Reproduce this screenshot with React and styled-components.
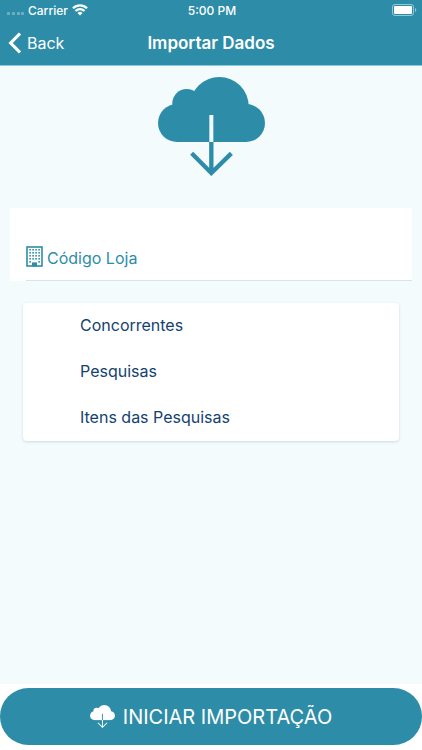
import React from 'react';
import styled, { createGlobalStyle } from 'styled-components';

const GlobalStyle = createGlobalStyle`
  * {
    box-sizing: border-box;
  }

  body {
    margin: 0;
    background: #fff;
    font-family: Inter, 'Liberation Sans', sans-serif;
  }
`;

const PageStyles = styled.div`
  display: flex;
  flex-direction: column;
  min-height: 100vh;
`;

const HeaderStyles = styled.header`
  background: #2d8da8;
  border-bottom: 1px solid #8ccbdd;
  color: #fff;
`;

const StatusBar = styled.div`
  display: grid;
  grid-template-columns: 1fr auto 1fr;
  align-items: center;
  height: 20px;
  padding: 0 5px 0 7px;
  font-size: 12px;
  font-weight: 500;

  .carrier {
    display: flex;
    align-items: center;
    gap: 4px;
  }

  .battery {
    justify-self: end;
  }

  svg {
    display: block;
  }
`;

const NavBar = styled.div`
  display: grid;
  grid-template-columns: 1fr auto 1fr;
  align-items: center;
  height: 45px;
  padding: 0 8px;

  h1 {
    margin: 0;
    font-size: 17px;
    font-weight: 600;
  }
`;

const BackButton = styled.button`
  display: flex;
  align-items: center;
  gap: 5px;
  padding: 0;
  border: 0;
  background: none;
  color: inherit;
  font: inherit;
  font-size: 16px;
  cursor: pointer;
`;

const ContentStyles = styled.main`
  flex: 1;
  background: #f3fbfd;
`;

const HeroIcon = styled.div`
  display: flex;
  justify-content: center;
  padding: 11px 0 32px;
`;

const Field = styled.div`
  margin: 0 10px;
  padding: 27px 0 0 16px;
  background: #fff;
  color: #2d8da8;

  .field__inner {
    display: flex;
    align-items: center;
    gap: 4px;
    height: 46px;
    border-bottom: 1px solid #d5e5ea;
  }

  label {
    display: flex;
    margin-bottom: 2px;
  }

  input {
    flex: 1;
    min-width: 0;
    padding: 0;
    border: 0;
    outline: 0;
    background: none;
    color: inherit;
    font: inherit;
    font-size: 16px;
  }

  input::placeholder {
    color: inherit;
    opacity: 1;
  }
`;

const CardList = styled.ul`
  margin: 22px 23px;
  padding: 0;
  border-radius: 4px;
  background: #fff;
  box-shadow: 0 1px 3px rgba(0, 50, 70, 0.16);
  list-style: none;
`;

const CardItem = styled.li`
  display: flex;
  align-items: center;
  height: 46px;
  padding: 0 16px 2px 57px;
  color: #14426f;
  font-size: 16px;
`;

const FooterStyles = styled.footer`
  padding: 4px 0 5px;
  background: #fff;
`;

const ImportButton = styled.button`
  display: flex;
  align-items: center;
  justify-content: center;
  gap: 8px;
  width: 100%;
  height: 57px;
  border: 0;
  border-radius: 29px;
  background: #2d8da8;
  color: #fff;
  font: inherit;
  font-size: 20px;
  cursor: pointer;
`;

function CloudDownload({ width, height, color, stem }) {
  return (
    <svg width={width} height={height} viewBox="52 36 321 297" aria-hidden="true">
      <g fill={color}>
        <circle cx="109" cy="174" r="57" />
        <circle cx="316" cy="174" r="57" />
        <circle cx="138" cy="115" r="43" />
        <circle cx="236" cy="124" r="88" />
        <rect x="109" y="120" width="207" height="111" />
      </g>
      <path d="M212 150V231" stroke={stem} strokeWidth="12" />
      <path
        d="M212 231V322M153 265L212 324L272 265"
        fill="none"
        stroke={color}
        strokeWidth="13"
      />
    </svg>
  );
}

function Wifi() {
  return (
    <svg width="16" height="12" viewBox="0 0 16 12" fill="#fff" aria-hidden="true">
      <path d="M8 11.6L10.5 9a3.6 3.6 0 0 0-5 0z" />
      <path
        d="M3.5 7a6.4 6.4 0 0 1 9 0M1 4.3a10 10 0 0 1 14 0"
        fill="none"
        stroke="#fff"
        strokeWidth="2.2"
      />
    </svg>
  );
}

function Signal() {
  return (
    <svg width="17" height="12" viewBox="0 0 17 12" fill="#fff" opacity="0.3" aria-hidden="true">
      {[0, 5, 10, 14].map((x) => (
        <rect key={x} x={x} y="8" width="3" height="3" rx="0.5" />
      ))}
    </svg>
  );
}

function Battery() {
  return (
    <svg className="battery" width="25" height="12" viewBox="0 0 25 12" aria-hidden="true">
      <rect x="0.5" y="0.5" width="21" height="11" rx="2.5" fill="none" stroke="#fff" opacity="0.5" />
      <rect x="2" y="2" width="18" height="8" rx="1" fill="#fff" />
      <path d="M23 4a2.2 2.2 0 0 1 0 4z" fill="#fff" opacity="0.5" />
    </svg>
  );
}

function Building() {
  return (
    <svg width="17" height="21" viewBox="0 0 17 21" aria-hidden="true">
      <rect x="1" y="1" width="15" height="19" fill="none" stroke="#2d8da8" strokeWidth="1.6" />
      <g fill="#2d8da8">
        {[3, 6, 9, 12].map((x) =>
          [3, 6, 9, 12, 15]
            .filter((y) => y < 15 || x === 3 || x === 12)
            .map((y) => <rect key={`${x}-${y}`} x={x + 0.3} y={y} width="1.6" height="1.6" />)
        )}
        <rect x="6" y="16.4" width="5" height="4" />
      </g>
    </svg>
  );
}

const items = ['Concorrentes', 'Pesquisas', 'Itens das Pesquisas'];

export default function App() {
  return (
    <PageStyles>
      <GlobalStyle />
      <HeaderStyles>
        <StatusBar>
          <div className="carrier">
            <Signal />
            <span>Carrier</span>
            <Wifi />
          </div>
          <span>5:00 PM</span>
          <Battery />
        </StatusBar>
        <NavBar>
          <BackButton type="button">
            <svg width="14" height="22" viewBox="0 0 14 22" aria-hidden="true">
              <path d="M12 1.5L2.7 11L12 20.5" fill="none" stroke="#fff" strokeWidth="3.2" />
            </svg>
            Back
          </BackButton>
          <h1>Importar Dados</h1>
        </NavBar>
      </HeaderStyles>
      <ContentStyles>
        <HeroIcon>
          <CloudDownload width={107} height={99} color="#2d8da8" stem="#f3fbfd" />
        </HeroIcon>
        <Field>
          <div className="field__inner">
            <label htmlFor="codigo-loja" aria-label="Código Loja">
              <Building />
            </label>
            <input id="codigo-loja" type="text" placeholder="Código Loja" />
          </div>
        </Field>
        <CardList>
          {items.map((item) => (
            <CardItem key={item}>{item}</CardItem>
          ))}
        </CardList>
      </ContentStyles>
      <FooterStyles>
        <ImportButton type="button">
          <CloudDownload width={25} height={23} color="#fff" stem="#2d8da8" />
          INICIAR IMPORTAÇÃO
        </ImportButton>
      </FooterStyles>
    </PageStyles>
  );
}
